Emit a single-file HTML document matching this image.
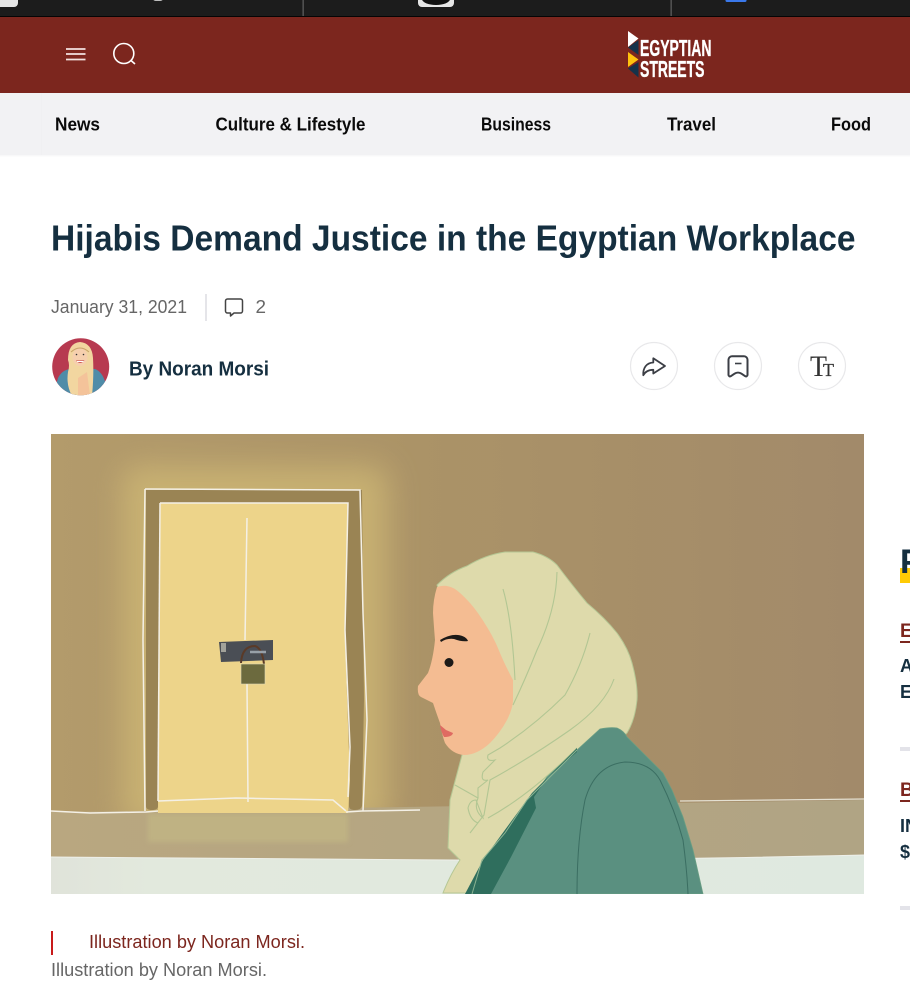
<!DOCTYPE html>
<html lang="en">
<head>
<meta charset="utf-8">
<title>Hijabis Demand Justice in the Egyptian Workplace</title>
<style>
html,body{margin:0;padding:0;width:910px;height:1004px;overflow:hidden;background:#fff}
svg{display:block}
text{font-family:"Liberation Sans",sans-serif}
.b{font-weight:700}
</style>
</head>
<body>
<svg xmlns="http://www.w3.org/2000/svg" width="910" height="1004" viewBox="0 0 910 1004">
<defs>
<linearGradient id="bg" x1="0" y1="0" x2="1" y2="0">
<stop offset="0" stop-color="#b39b6b"/>
<stop offset=".45" stop-color="#ab9367"/>
<stop offset="1" stop-color="#a28a6a"/>
</linearGradient>
<linearGradient id="band" x1="0" y1="0" x2="1" y2="0">
<stop offset="0" stop-color="#b9a780"/>
<stop offset="1" stop-color="#b0a484"/>
</linearGradient>
<linearGradient id="floor" x1="0" y1="0" x2="1" y2="0">
<stop offset="0" stop-color="#e0e3da"/>
<stop offset=".12" stop-color="#e2e9dd"/>
<stop offset="1" stop-color="#dfe9e0"/>
</linearGradient>
<filter id="blur" x="-30%" y="-30%" width="160%" height="160%"><feGaussianBlur stdDeviation="15"/></filter>
<filter id="mid" x="-10%" y="-30%" width="120%" height="160%"><feGaussianBlur stdDeviation="2.500"/></filter>
<filter id="soft" x="-10%" y="-10%" width="120%" height="120%"><feGaussianBlur stdDeviation=".35"/></filter>
<clipPath id="img"><rect x="51" y="434" width="813" height="460"/></clipPath>
<clipPath id="av"><circle cx="80.7" cy="366.8" r="28.5"/></clipPath>
</defs>

<!-- browser strip -->
<rect width="910" height="16" fill="#1c1c1c"/>
<rect y="16" width="910" height="1.200" fill="#050505"/>
<rect x="302.500" width="1.300" height="16" fill="#5c5c5c"/>
<rect x="670.500" width="1.300" height="16" fill="#5c5c5c"/>
<rect x="-8" y="-8" width="26" height="15" rx="4" fill="#e6e6e6"/>
<rect x="153" y="-4" width="10" height="5" rx="2.500" fill="#bdbdbd"/>
<rect x="418" y="-8" width="36" height="15" rx="4" fill="#e6e6e6"/>
<ellipse cx="436" cy="-1" rx="14" ry="6" fill="#111"/>
<rect x="725.500" y="-4" width="21" height="6" rx="1.500" fill="#3a78ea"/>

<!-- red header -->
<rect y="17" width="910" height="76" fill="#7c261e"/>
<g stroke="#f3e2e0" stroke-width="1.800">
<line x1="66" y1="49" x2="85.500" y2="49"/>
<line x1="66" y1="54" x2="85.500" y2="54"/>
<line x1="66" y1="59.500" x2="85.500" y2="59.500"/>
</g>
<circle cx="123.800" cy="53.500" r="10" fill="none" stroke="#fff" stroke-width="1.600"/>
<line x1="131" y1="60.500" x2="135" y2="64" stroke="#fff" stroke-width="1.600"/>

<!-- logo -->
<polygon points="628,31 638.500,38.500 628,47" fill="#fff"/>
<polygon points="638.500,40 628,47.500 638.500,55" fill="#15324a"/>
<polygon points="628,52 638.500,59.500 628,67" fill="#ffc20e"/>
<polygon points="638.500,62 628,68.500 638.500,77.500" fill="#15324a"/>
<text x="640" y="56" class="b" font-size="23" fill="#fff" stroke="#fff" stroke-width=".35" textLength="71.500" lengthAdjust="spacingAndGlyphs">EGYPTIAN</text>
<text x="640" y="77" class="b" font-size="23" fill="#fff" stroke="#fff" stroke-width=".35" textLength="64.500" lengthAdjust="spacingAndGlyphs">STREETS</text>

<!-- nav -->
<rect y="93" width="910" height="62" fill="#f2f2f4"/>
<rect y="155" width="910" height="1.500" fill="#f8f8f9"/>
<rect x="41" y="93" width="1" height="62" fill="#f0f0f2"/>
<g font-size="18" fill="#0a0a0a">
<text x="55" y="130.500" class="b" textLength="45" lengthAdjust="spacingAndGlyphs">News</text>
<text x="215.500" y="130.500" class="b" textLength="150" lengthAdjust="spacingAndGlyphs">Culture &amp; Lifestyle</text>
<text x="481" y="130.500" class="b" textLength="70" lengthAdjust="spacingAndGlyphs">Business</text>
<text x="667" y="130.500" class="b" textLength="49" lengthAdjust="spacingAndGlyphs">Travel</text>
<text x="831" y="130.500" class="b" textLength="40" lengthAdjust="spacingAndGlyphs">Food</text>
</g>

<!-- title -->
<text x="51" y="250.500" class="b" font-size="36" fill="#152f40" textLength="804.500" lengthAdjust="spacingAndGlyphs">Hijabis Demand Justice in the Egyptian Workplace</text>

<!-- meta -->
<text x="51" y="313" font-size="18" fill="#666" textLength="136" lengthAdjust="spacingAndGlyphs">January 31, 2021</text>
<rect x="205" y="294" width="2" height="27" fill="#e5e5e9"/>
<path d="M227.500 299h13a2 2 0 0 1 2 2v10a2 2 0 0 1-2 2h-6.500l-3.500 3v-3h-3a2 2 0 0 1-2-2v-10a2 2 0 0 1 2-2z" fill="none" stroke="#444" stroke-width="1.500" stroke-linejoin="round"/>
<text x="255.500" y="313" font-size="18" fill="#666" textLength="10.500" lengthAdjust="spacingAndGlyphs">2</text>

<!-- avatar -->
<circle cx="80.700" cy="366.800" r="28.500" fill="#b73a50"/>
<g clip-path="url(#av)">
<path d="M52 400 L58 378 Q62 370 70 369 L95 369 Q103 372 106 385 L110 400Z" fill="#4f8ca8"/>
<path d="M68 360 Q68 343 80 342 Q92 343 93 358 Q94 375 92 396 L72 396 Q66 385 68 372 Q70 365 68 360Z" fill="#f2d6a0"/>
<ellipse cx="80" cy="357" rx="7.500" ry="9" fill="#f6cfae"/>
<path d="M71 352 Q80 344 89 352" fill="none" stroke="#c9a36a" stroke-width="1"/>
<path d="M76 360.500 Q80 365 84.500 360.500Z" fill="#c2303d"/>
<path d="M77 361 H83.500 V362 H77Z" fill="#fff"/>
<path d="M78 378 L87 372 L90 396 L78 396Z" fill="#f4c39a"/>
<circle cx="76.500" cy="354.500" r=".8" fill="#333"/>
<circle cx="83.500" cy="354.500" r=".8" fill="#333"/>
</g>
<text x="129" y="375.500" class="b" font-size="20" fill="#152f40" textLength="140" lengthAdjust="spacingAndGlyphs">By Noran Morsi</text>

<!-- action buttons -->
<g fill="#fff" stroke="#e8e8ea" stroke-width="1.200">
<circle cx="654" cy="366" r="23.500"/>
<circle cx="738" cy="366" r="23.500"/>
<circle cx="822" cy="366" r="23.500"/>
</g>
<path d="M653.300 358.300 L665 366 L653.300 373.500 V369.800 C649 369.800 645.500 371.200 643.300 375.200 C642.800 368 646.500 362.800 653.300 362.500Z" fill="none" stroke="#3b3e45" stroke-width="1.800" stroke-linejoin="round"/>
<path d="M732 356.300h12a3.500 3.500 0 0 1 3.500 3.500v15.200a1.500 1.500 0 0 1-2.300 1.200l-3.700-2.500a6 6 0 0 0-7 0l-3.700 2.500a1.500 1.500 0 0 1-2.300-1.200v-15.200a3.500 3.500 0 0 1 3.500-3.500z" fill="none" stroke="#3b3e45" stroke-width="2" stroke-linejoin="round"/>
<line x1="735" y1="363.500" x2="741.500" y2="363.500" stroke="#3b3e45" stroke-width="1.600"/>
<text x="810" y="376" font-size="30" fill="#333" textLength="17" lengthAdjust="spacingAndGlyphs" style="font-family:'Liberation Serif',serif">T</text>
<text x="823" y="376" font-size="18" fill="#333" stroke="#333" stroke-width=".3" textLength="11" lengthAdjust="spacingAndGlyphs" style="font-family:'Liberation Serif',serif">T</text>

<!-- illustration -->
<g clip-path="url(#img)">
<rect x="51" y="434" width="813" height="460" fill="url(#bg)"/>
<rect x="122" y="466" width="266" height="360" rx="14" fill="#d2bb76" opacity=".72" filter="url(#blur)"/>
<!-- wall band and floor -->
<path d="M51 812 L145 811 L864 800 V860 H51Z" fill="url(#band)"/>
<rect x="148" y="814" width="200" height="28" fill="#bfb283" filter="url(#mid)"/>
<path d="M51 857 Q300 859 450 860 T864 855 V894 H51Z" fill="url(#floor)"/>
<path d="M51 857 Q300 859 450 860 T864 855" fill="none" stroke="#eef0ea" stroke-width="1"/>
<!-- door frame -->
<rect x="146" y="490" width="216" height="14" fill="#9a8454"/>
<path d="M146 490 H160 L158 806 Q158 810 152 810 Q146 810 146 806Z" fill="#9a8454"/>
<path d="M348 490 H362 L364 700 L362 806 Q361 810 355 810 Q349 810 349 806 L345 640Z" fill="#9a8454"/>
<!-- door -->
<path d="M160 503 L348 503 L345 640 L350 780 L348 813 L158 813 Z" fill="#edd48a"/>
<g fill="none" stroke="#f4f0e6" stroke-width="1.500" filter="url(#soft)">
<path d="M145 489 L360 490 L363 613 L367 720 L363 811"/>
<path d="M145 489 L143 640 L145 811"/>
<path d="M160 503 L348 503 L345 630 L350 747 L348 797"/>
<path d="M160 503 L158 801"/>
<path d="M158 801 L236 798 L333 800 L346 811"/>
<path d="M247 518 L245 640 M247 684 L248 802"/>
<path d="M51 811 L90 813 L146 812 L158 811"/>
<path d="M346 812 L362 811 L420 810"/>
</g>
<path d="M680 801 L864 799" stroke="#e4e0d2" stroke-width="1.200" fill="none"/>
<!-- lock -->
<polygon points="219,642 273,640 273,660 221,662" fill="#4a4e55"/>
<rect x="221" y="643" width="5" height="9" fill="#c8c6b8" opacity=".7"/>
<path d="M241 663 Q242 646 255 646 Q262 648 264 664" fill="none" stroke="#5a3a28" stroke-width="2"/>
<path d="M250 652 H266" stroke="#98a0a8" stroke-width="2.500"/>
<rect x="241" y="664" width="24" height="20" fill="#6c6a3e" stroke="#ddd8b4" stroke-width=".6"/>

<!-- hijab -->
<path d="M437 585 Q450 572 467 566 Q485 555 505 552 L533 552 Q548 556 557 565 Q572 585 587 603 Q605 618 617 633 Q628 648 632 663 Q638 685 637 700 Q635 720 627 733 L600 760 L540 800 L490 860 L467 893 L443 893 Q450 875 460 860 L448 848 L450 800 L462 755 L480 700Z" fill="#dedaab" stroke="#b5c794" stroke-width="1"/>
<g fill="none" stroke="#b2c693" stroke-width="1.100">
<path d="M503 589 Q512 620 515 680"/>
<path d="M557 572 Q556 610 537 650 Q525 680 513 705"/>
<path d="M590 633 Q582 665 565 695 Q535 725 500 748 L488 755 Q486 762 495 760 L483 772 Q480 782 488 780 L478 788 L478 798"/>
<path d="M614 679 Q605 705 570 730 Q530 758 490 780 L484 815 L470 833"/>
<path d="M455 785 L478 798 Q473 810 483 818 L476 800 Q470 800 468 808 Q470 820 478 823"/>
<path d="M488 818 Q530 795 577 748"/>
</g>
<!-- face -->
<path d="M437 587 Q433 600 433 613 Q434 628 435 640 Q433 660 428 673 L418 686 Q417 695 421 697 L433 703 Q437 715 440 723 Q442 735 445 743 Q452 754 464 755 Q477 755 490 743 Q500 733 507 720 Q513 708 513 700 L513 680 Q505 665 500 653 Q495 640 487 627 Q478 612 470 603 Q458 590 453 588 Q445 584 437 587Z" fill="#f4bc92"/>
<path d="M440 640 Q450 634 458 635 Q466 636 468 641 Q462 642 454 639 Q447 638 441 642Z" fill="#1c1a18"/>
<circle cx="449" cy="662.500" r="4.500" fill="#1c1a18"/>
<path d="M440 725 L446 730 L453 733 Q452 737 444 737 Q441 732 440 725Z" fill="#df6b62"/>

<!-- jacket -->
<path d="M600 729 Q610 727 617 728 Q624 731 627 737 L640 750 L663 773 L672 790 L683 817 L693 850 L703 894 H490 L510 857 L535 808 L533 797 L547 777 L577 750Z" fill="#5a9080" stroke="#6a9e83" stroke-width=".8"/>
<path d="M577 748 L532 793 L510 823 L483 860 L465 894 H491 L511 857 L536 808 L534 797 L548 777 L577 752Z" fill="#2f6e5d"/>
<g fill="none" stroke="#3b6e62" stroke-width="1">
<path d="M577 894 Q577 840 585 800 Q595 765 625 762 Q650 762 660 780 Q675 810 683 840 Q687 870 688 894"/>
</g>
<path d="M577 750 L527 800 L505 833 L482 860 L472 894" fill="none" stroke="#8bb392" stroke-width="1"/>
</g>

<!-- caption -->
<rect x="51" y="931" width="2" height="24" fill="#c81a1a"/>
<text x="89" y="948" font-size="18" fill="#7c261e" textLength="216" lengthAdjust="spacingAndGlyphs">Illustration by Noran Morsi.</text>
<text x="51" y="976" font-size="18" fill="#666" textLength="216" lengthAdjust="spacingAndGlyphs">Illustration by Noran Morsi.</text>

<!-- sidebar -->
<rect x="900" y="568" width="10" height="15" fill="#ffcb05"/>
<text x="900" y="573" class="b" font-size="34" fill="#152f40">P</text>
<text x="900" y="637" class="b" font-size="19" fill="#7c261e">E</text>
<rect x="900" y="641" width="10" height="2" fill="#7c261e"/>
<text x="900" y="672" class="b" font-size="18" fill="#152f40">A</text>
<text x="900" y="698" class="b" font-size="18" fill="#152f40">E</text>
<rect x="900" y="747" width="10" height="4" fill="#e3e3e9"/>
<text x="900" y="796" class="b" font-size="19" fill="#7c261e">B</text>
<rect x="900" y="800" width="10" height="2" fill="#7c261e"/>
<text x="900" y="832" class="b" font-size="18" fill="#152f40">IN</text>
<text x="900" y="858" class="b" font-size="18" fill="#152f40">$</text>
<rect x="900" y="906" width="10" height="4" fill="#e3e3e9"/>
</svg>
</body>
</html>
